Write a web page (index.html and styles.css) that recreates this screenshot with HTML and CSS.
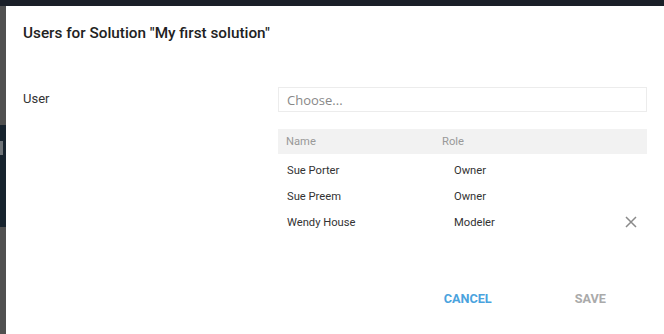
FILE: index.html
```html
<!DOCTYPE html>
<html lang="en">
<head>
  <meta charset="UTF-8">
  <title>Users for Solution</title>
  <link rel="stylesheet" href="styles.css">
</head>
<body>
  <div class="backdrop">
    <div class="topbar"></div>
    <div class="sidepanel">
      <div class="sidepanel-dark"><span class="sidepanel-tab"></span></div>
    </div>
  </div>

  <div class="dialog">
    <h2 class="dialog-title">Users for Solution "My first solution"</h2>

    <div class="form-row">
      <label class="form-label">User</label>
      <div class="form-field">
        <input class="chooser" type="text" placeholder="Choose...">

        <table class="user-table">
          <thead>
            <tr>
              <th class="col-name">Name</th>
              <th class="col-role">Role</th>
              <th class="col-action"></th>
            </tr>
          </thead>
          <tbody>
            <tr>
              <td>Sue Porter</td>
              <td class="role">Owner</td>
              <td></td>
            </tr>
            <tr>
              <td>Sue Preem</td>
              <td class="role">Owner</td>
              <td></td>
            </tr>
            <tr>
              <td>Wendy House</td>
              <td class="role">Modeler</td>
              <td class="remove">
                <svg width="12" height="12" viewBox="0 0 12 12">
                  <path d="M1 1 L11 11 M11 1 L1 11" stroke="#8a8a8a" stroke-width="1.5" fill="none"/>
                </svg>
              </td>
            </tr>
          </tbody>
        </table>
      </div>
    </div>

    <div class="actions">
      <button class="btn btn-cancel">Cancel</button>
      <button class="btn btn-save" disabled>Save</button>
    </div>
  </div>
</body>
</html>
```

FILE: styles.css
```css
html, body {
  margin: 0;
  height: 100%;
  overflow: hidden;
}
body {
  font-family: Roboto, "Liberation Sans", sans-serif;
  background: #505050;
  color: #333;
}
.backdrop {
  height: 100%;
  display: flex;
  flex-direction: column;
}
.topbar {
  height: 6px;
  background: #1a1f28;
  flex: none;
}
.sidepanel {
  width: 6px;
  padding-top: 119px;
}
.sidepanel-dark {
  height: 102px;
  background: #17232e;
  padding-top: 16px;
  box-sizing: border-box;
}
.sidepanel-tab {
  display: block;
  width: 3px;
  height: 14px;
  background: #6f7478;
}
.dialog {
  position: absolute;
  left: 6px;
  top: 6px;
  right: 0;
  bottom: 0;
  background: #fff;
  padding: 17px 17px 0 17px;
}
.dialog-title {
  margin: 0;
  font-size: 15.3px;
  font-weight: 500;
  line-height: 20px;
  color: #222;
}
.form-row {
  display: flex;
  margin-top: 44px;
}
.form-label {
  width: 255px;
  flex: none;
  font-size: 13px;
  line-height: 24px;
  color: #333;
}
.form-field {
  flex: 1;
}
.chooser {
  display: block;
  width: 100%;
  box-sizing: border-box;
  height: 25px;
  border: 1px solid #ececec;
  padding: 0 8px;
  font-family: "Open Sans", Roboto, sans-serif;
  font-size: 13px;
  color: #333;
  outline: none;
}
.chooser::placeholder {
  color: #888;
}
.user-table {
  width: 100%;
  border-collapse: collapse;
  margin-top: 17px;
  font-size: 11.2px;
}
.user-table th {
  background: #f2f2f2;
  color: #999;
  font-weight: 400;
  text-align: left;
  height: 25px;
  padding: 0 8px;
}
.user-table th.col-name {
  width: 140px;
}
.user-table th.col-role {
  width: 120px;
}
.user-table td {
  height: 26px;
  padding: 0 9px;
  color: #333;
}
.user-table tbody tr:first-child td {
  padding-top: 3px;
}
.user-table td.role {
  padding-left: 20px;
}
.user-table td.remove {
  text-align: right;
  padding-right: 10px;
}
.user-table td.remove svg {
  display: block;
  margin-left: auto;
}
.actions {
  display: flex;
  justify-content: flex-end;
  margin-top: 50px;
  margin-right: 41px;
}
.btn {
  background: none;
  border: none;
  font-family: Roboto, sans-serif;
  font-size: 12.7px;
  font-weight: 700;
  text-transform: uppercase;
  padding: 6px 0;
  cursor: pointer;
}
.btn-cancel {
  color: #4aa3de;
  margin-right: 83px;
}
.btn-save {
  color: #aaa;
  cursor: default;
}
```
